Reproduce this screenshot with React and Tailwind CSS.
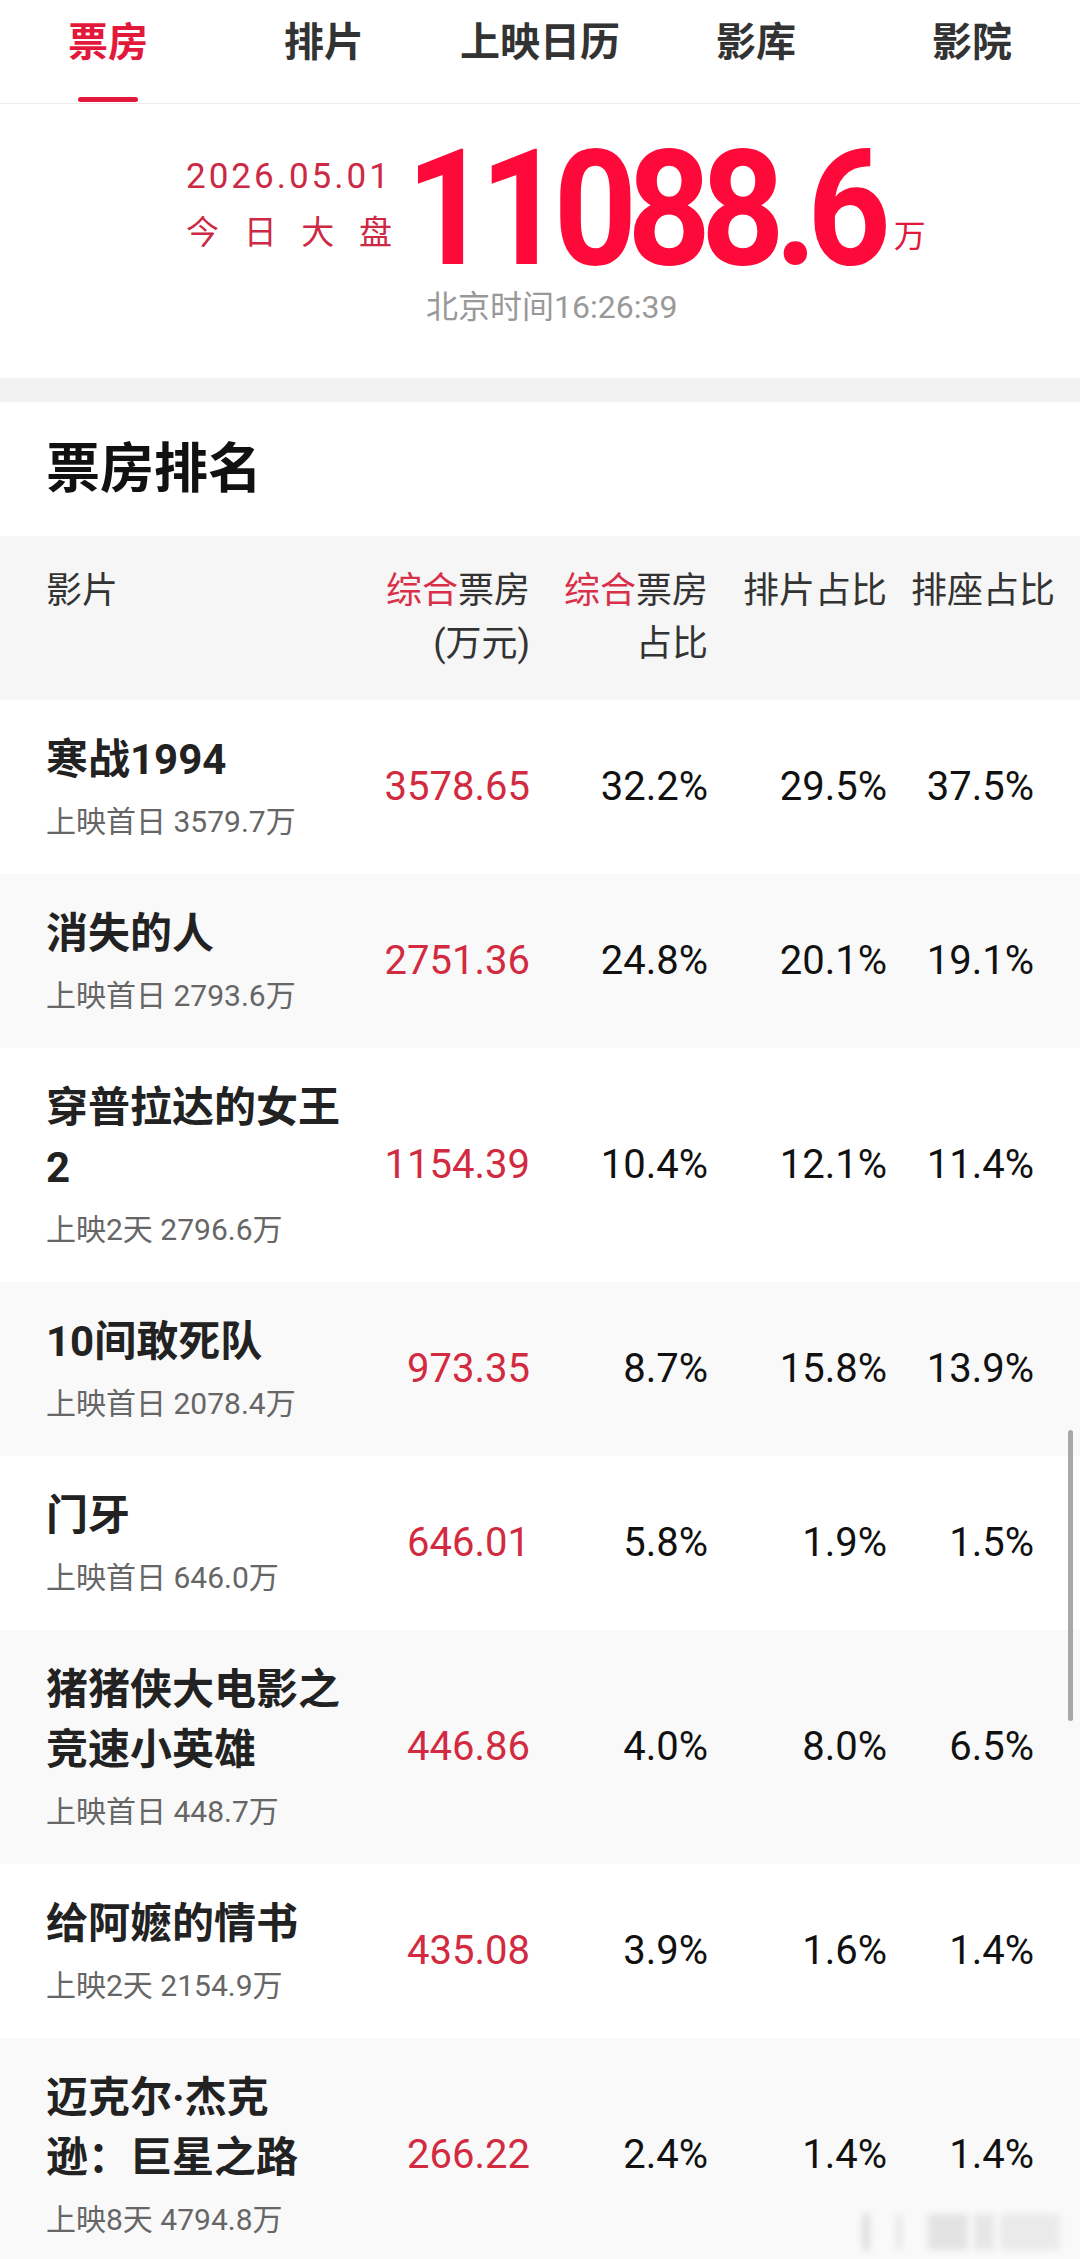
const font = "font-['Roboto','Noto_Sans_CJK_SC',sans-serif]";

const tabs = ["票房", "排片", "上映日历", "影库", "影院"];

const movies = [
  { name: ["寒战1994"], sub: "上映首日 3579.7万", box: "3578.65", share: "32.2%", show: "29.5%", seat: "37.5%" },
  { name: ["消失的人"], sub: "上映首日 2793.6万", box: "2751.36", share: "24.8%", show: "20.1%", seat: "19.1%" },
  { name: ["穿普拉达的女王", "2"], sub: "上映2天 2796.6万", box: "1154.39", share: "10.4%", show: "12.1%", seat: "11.4%" },
  { name: ["10间敢死队"], sub: "上映首日 2078.4万", box: "973.35", share: "8.7%", show: "15.8%", seat: "13.9%" },
  { name: ["门牙"], sub: "上映首日 646.0万", box: "646.01", share: "5.8%", show: "1.9%", seat: "1.5%" },
  { name: ["猪猪侠大电影之", "竞速小英雄"], sub: "上映首日 448.7万", box: "446.86", share: "4.0%", show: "8.0%", seat: "6.5%" },
  { name: ["给阿嬷的情书"], sub: "上映2天 2154.9万", box: "435.08", share: "3.9%", show: "1.6%", seat: "1.4%" },
  { name: ["迈克尔·杰克", "逊：巨星之路"], sub: "上映8天 4794.8万", box: "266.22", share: "2.4%", show: "1.4%", seat: "1.4%" },
];

const cols = "grid grid-cols-[300px_184px_178px_179px_168px]";

export default function App() {
  return (
    <div className={`relative h-[2259px] w-[1080px] overflow-hidden bg-white ${font}`}>
      <nav className="grid h-[104px] grid-cols-5 border-b border-[#ececec]">
        {tabs.map((tab, i) => (
          <div key={tab} className="flex flex-col items-center pt-[15px]">
            <span
              className={`text-[40px] font-bold leading-[56px] ${
                i === 0 ? "text-[#e3193c]" : "text-[#333]"
              }`}
            >
              {tab}
            </span>
            <span className="flex-1" />
            {i === 0 ? <span className="mb-[1px] h-[5px] w-[60px] rounded-full bg-[#e3193c]" /> : null}
          </div>
        ))}
      </nav>

      <section className="h-[274px]">
        <div className="flex h-[183px] items-start pl-[186px]">
          <div className="mt-[49px] w-[212px]">
            <div className="text-[35px] leading-[48px] tracking-[3px] text-[#cc2944]">2026.05.01</div>
            <div className="flex justify-between pr-[6px] text-[33px] leading-[64px] text-[#cc2944]">
              <span>今</span>
              <span>日</span>
              <span>大</span>
              <span>盘</span>
            </div>
          </div>
          <div className="ml-[8px] mt-[24px] origin-left scale-x-[0.9] text-[162px] font-bold leading-none tracking-[-11px] text-[#fe0a3a]">
            11088.6
          </div>
          <div className="ml-[-40px] mt-[116px] text-[32px] leading-[32px] text-[#e3193c]">万</div>
        </div>
        <div className="pl-[426px] text-[32px] leading-[40px] text-[#999]">北京时间16:26:39</div>
      </section>

      <div className="h-[24px] bg-[#f2f2f2]" />

      <div className="flex h-[134px] items-center pl-[46px]">
        <h2 className="text-[54px] font-bold text-[#111]">票房排名</h2>
      </div>

      <div className={`${cols} h-[164px] items-start bg-[#f6f6f6] pl-[46px] pt-[29px] text-[36px] leading-[53px] text-[#333]`}>
        <div>影片</div>
        <div className="text-right">
          <span className="text-[#d9304a]">综合</span>票房
          <br />
          (万元)
        </div>
        <div className="text-right">
          <span className="text-[#d9304a]">综合</span>票房
          <br />
          占比
        </div>
        <div className="text-right">排片占比</div>
        <div className="text-right">排座占比</div>
      </div>

      {movies.map((movie, i) => (
        <div
          key={movie.box}
          className={`${cols} items-center py-[30px] pl-[46px] ${i % 2 ? "bg-[#f9f9f9]" : "bg-white"}`}
        >
          <div>
            {movie.name.map((line) => (
              <div key={line} className="text-[42px] font-bold leading-[60px] text-[#222]">
                {line}
              </div>
            ))}
            <div className="mt-[10px] text-[30px] leading-[44px] text-[#666]">{movie.sub}</div>
          </div>
          <div className="text-right text-[40px] leading-none text-[#d22a40]">{movie.box}</div>
          <div className="text-right text-[40px] leading-none text-[#111]">{movie.share}</div>
          <div className="text-right text-[40px] leading-none text-[#111]">{movie.show}</div>
          <div className="pr-[21px] text-right text-[40px] leading-none text-[#111]">{movie.seat}</div>
        </div>
      ))}

      <div className="absolute right-[7px] top-[1430px] h-[291px] w-[5px] rounded-full bg-[#a8a8a8]" />

      <div className="absolute left-[862px] top-[2214px] flex h-[36px] w-[205px] items-stretch gap-[6px] opacity-40 blur-[3px]">
        <span className="w-[8px] bg-[#bbb]" />
        <span className="ml-[20px] w-[6px] bg-[#ccc]" />
        <span className="ml-[20px] w-[40px] bg-[#c4c4c4]" />
        <span className="w-[20px] bg-[#ccc]" />
        <span className="w-[60px] bg-[#d4d4d4]" />
      </div>
    </div>
  );
}
